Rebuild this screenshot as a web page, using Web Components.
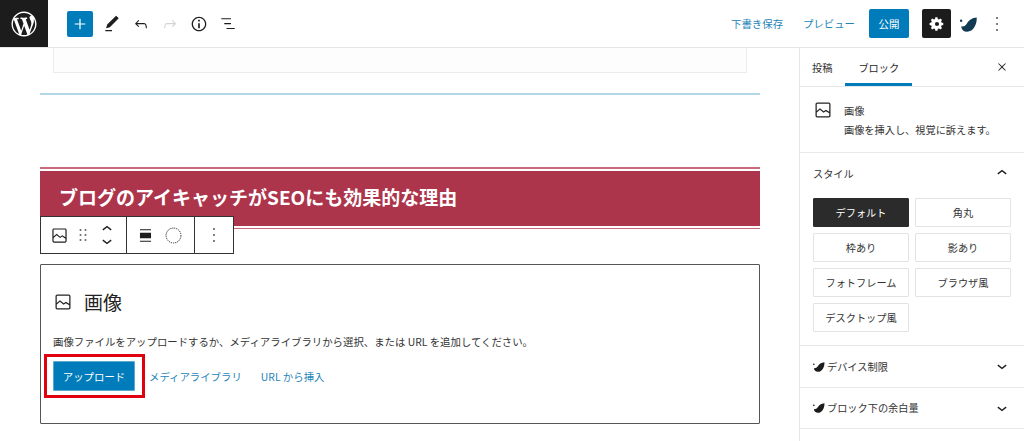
<!DOCTYPE html>
<html lang="ja">
<head>
<meta charset="utf-8">
<title>画像ブロック</title>
<style>
  html, body { margin: 0; height: 100%; overflow: hidden; background: #fff; }
  body { font-family: "Noto Sans CJK JP", "Noto Sans", sans-serif; color: #2f2f2f; }
</style>
</head>
<body>
<edit-screen>
  <top-bar slot="top"></top-bar>
  <editor-canvas slot="main"></editor-canvas>
  <settings-sidebar slot="side"></settings-sidebar>
</edit-screen>

<script>
const ICONS = {
  wp: '<path fill="currentColor" d="M20 10c0-5.51-4.49-10-10-10C4.48 0 0 4.49 0 10c0 5.52 4.48 10 10 10 5.51 0 10-4.48 10-10zM7.78 15.37L4.37 6.22c.55-.02 1.17-.08 1.17-.08.5-.06.44-1.13-.06-1.11 0 0-1.45.11-2.37.11-.18 0-.37 0-.58-.01C4.12 2.69 6.87 1.11 10 1.11c2.33 0 4.45.87 6.05 2.34-.68-.11-1.65.39-1.65 1.58 0 .74.45 1.36.9 2.1.35.61.55 1.36.55 2.46 0 1.49-1.4 5-1.4 5l-3.03-8.37c.54-.02.82-.17.82-.17.5-.05.44-1.25-.06-1.22 0 0-1.44.12-2.38.12-.87 0-2.33-.12-2.33-.12-.5-.03-.56 1.2-.06 1.22l.92.08 1.26 3.41zM17.41 10c.24-.64.74-1.87.43-4.25.7 1.29 1.05 2.71 1.05 4.25 0 3.29-1.73 6.24-4.4 7.78.97-2.59 1.94-5.2 2.92-7.78zM6.1 18.09C3.12 16.65 1.11 13.53 1.11 10c0-1.3.23-2.48.72-3.59C3.25 10.3 4.67 14.2 6.1 18.09zm4.03-6.63l2.58 6.98c-.86.29-1.76.45-2.71.45-.79 0-1.57-.11-2.29-.33.81-2.38 1.62-4.74 2.42-7.1z" transform="translate(2 2)"/>',
  plus: '<path fill="currentColor" d="M11.200 5h1.600v6.200H19v1.600h-6.200V19h-1.600v-6.200H5v-1.600h6.200z"/>',
  pen: '<path fill="currentColor" d="M20.100 5.100 16.900 2 6.200 12.700l-1.300 4.400 4.500-1.300L20.100 5.100zM4 20.800h8v-1.500H4v1.500z"/>',
  undo: '<path fill="currentColor" d="M18.300 11.700c-.6-.6-1.400-.9-2.300-.9H6.700l2.900-3.300-1.100-1-4.500 5L8.500 16l1-1-2.700-2.700H16c.5 0 .9.2 1.300.5 1 1 1 3.400 1 4.500v.3h1.500v-.2c0-1.500 0-4.300-1.500-5.700z"/>',
  redo: '<path fill="currentColor" d="M15.600 6.500l-1.100 1 2.900 3.300H8c-.9 0-1.700.3-2.300.9-1.400 1.500-1.400 4.200-1.400 5.600v.2h1.500v-.3c0-1.100 0-3.500 1-4.500.3-.3.7-.5 1.300-.5h9.200L14.500 15l1.100 1.100 4.600-4.600-4.600-5z"/>',
  info: '<path fill="currentColor" d="M12 3.200c-4.800 0-8.800 3.900-8.800 8.800 0 4.800 3.900 8.800 8.800 8.800 4.800 0 8.800-3.900 8.800-8.800 0-4.800-4-8.800-8.800-8.800zm0 16c-4 0-7.200-3.300-7.200-7.200C4.800 8 8 4.800 12 4.800s7.200 3.300 7.200 7.200c0 4-3.200 7.200-7.200 7.200zM11 17h2v-6h-2v6zm0-8h2V7h-2v2z"/>',
  list: '<path fill="currentColor" d="M3 4.200h13v1.600H3zM7 10.700h9v1.600H7zM10 17.200h11v1.600H10z"/>',
  gear: '<path fill="currentColor" d="M19.500 13.300v-2.600l-2.100-.4c-.1-.5-.3-1-.6-1.400l1.200-1.800-1.800-1.800-1.800 1.200c-.4-.3-.9-.5-1.400-.6l-.4-2.100h-2.600l-.4 2.100c-.5.1-1 .3-1.400.6L6.400 5.300 4.600 7.100l1.200 1.800c-.3.4-.5.9-.6 1.400l-2.100.4v2.600l2.100.4c.1.500.3 1 .6 1.400l-1.200 1.800 1.800 1.800 1.800-1.200c.4.3.9.5 1.400.6l.4 2.100h2.600l.4-2.100c.5-.1 1-.3 1.400-.6l1.800 1.200 1.800-1.800-1.200-1.800c.3-.4.5-.9.6-1.400l2.100-.4zM12 14.500a2.500 2.500 0 1 1 0-5 2.500 2.500 0 0 1 0 5z"/>',
  leaf: '<path fill="currentColor" d="M21.500 5C22 12 18 20.500 11 20.500c-3.500 0-6-2-6.500-6 2 .8 4.500-.2 6-2.500C12.500 8.500 16.500 5 21.500 5z"/><circle fill="currentColor" cx="4.500" cy="8.500" r="1.300"/>',
  dots: '<circle fill="currentColor" cx="12" cy="6" r=".9"/><circle fill="currentColor" cx="12" cy="12" r=".9"/><circle fill="currentColor" cx="12" cy="18" r=".9"/>',
  close: '<path fill="currentColor" d="M13.100 12l5.500-5.500-1.100-1.100-5.500 5.500-5.500-5.500-1.100 1.100 5.500 5.500-5.500 5.500 1.100 1.100 5.500-5.500 5.500 5.500 1.100-1.100z"/>',
  image: '<path fill="currentColor" d="M19 3H5c-1.100 0-2 .9-2 2v14c0 1.100.9 2 2 2h14c1.100 0 2-.9 2-2V5c0-1.100-.9-2-2-2zm.5 16c0 .3-.2.5-.5.500H5c-.3 0-.5-.2-.5-.5v-3.900l3.900-3.300 4.300 3.500 2.800-1.900 4 2.600V19zm0-4.800-4-2.500-2.700 1.800-4.400-3.600-3.900 3.300V5c0-.3.2-.5.500-.5h14c.3 0 .5.200.5.5v9.200z"/>',
  grip: '<path fill="currentColor" d="M8 7h2V5H8v2zm0 6h2v-2H8v2zm0 6h2v-2H8v2zm6-14v2h2V5h-2zm0 8h2v-2h-2v2zm0 6h2v-2h-2v2z"/>',
  up: '<path fill="currentColor" d="M6.500 12.400 12 8l5.500 4.400-1 1.300L12 10.100l-4.500 3.600z"/>',
  down: '<path fill="currentColor" d="M17.500 11.600 12 16l-5.500-4.400 1-1.300 4.500 3.600 4.500-3.600z"/>',
  align: '<path fill="currentColor" d="M5 4h14v1.500H5zM5 8.500h14v7H5zM5 18.500h14V20H5z"/>',
  dashcircle: '<circle cx="12" cy="12" r="8.500" fill="none" stroke="currentColor" stroke-width="1.100" stroke-dasharray="1.400 1.100"/>'
};

class AppIcon extends HTMLElement {
  connectedCallback() {
    const size = this.getAttribute('size') || 24;
    const root = this.shadowRoot || this.attachShadow({ mode: 'open' });
    root.innerHTML = `
      <style>:host { display: inline-flex; flex: none; width: ${size}px; height: ${size}px; } svg { display: block; width: 100%; height: 100%; }</style>
      <svg viewBox="0 0 24 24" aria-hidden="true">${ICONS[this.getAttribute('name')]}</svg>`;
  }
}

const screenTemplate = document.createElement('template');
screenTemplate.innerHTML = `
  <style>
  :host { display: grid; grid-template-columns: 1fr 225px; grid-template-rows: 48px 1fr; height: 441px; width: 1024px; overflow: hidden; }
  .top { grid-column: 1 / 3; display: block; }
  </style>
  <div class="top"><slot name="top"></slot></div>
  <slot name="main"></slot>
  <slot name="side"></slot>
`;
class EditScreen extends HTMLElement {
  constructor() {
    super();
    this.attachShadow({ mode: 'open' });
    this.shadowRoot.appendChild(screenTemplate.content.cloneNode(true));
  }
}

const topTemplate = document.createElement('template');
topTemplate.innerHTML = `
  <style>
  :host { display: flex; align-items: center; height: 48px; box-sizing: border-box; border-bottom: 1px solid #e6e6e6; background: #fff; color: #1e1e1e; }
  .logo { width: 48px; height: 47px; background: #1c1c1c; color: #fff; display: flex; align-items: center; justify-content: center; flex: none; }
  .tools { display: flex; align-items: center; margin-left: 19px; }
  .add { width: 26px; height: 26px; background: #007cba; color: #fff; border-radius: 2px; display: flex; align-items: center; justify-content: center; margin-right: 9px; }
  .tool { width: 20px; height: 20px; display: flex; align-items: center; justify-content: center; margin-right: 9px; }
  .off { color: #d4d4d4; }
  .right { margin-left: auto; display: flex; align-items: center; font-size: 10.4px; color: #1f85b8; }
  .draft { margin-right: 20px; }
  .publish { width: 40px; height: 29px; margin-left: 14px; background: #007cba; color: #fff; border-radius: 2px; display: flex; align-items: center; justify-content: center; }
  .gear { width: 29px; height: 29px; margin-left: 13px; background: #1c1c1c; color: #fff; border-radius: 2px; display: flex; align-items: center; justify-content: center; }
  .leaf { margin-left: 6px; color: #123a52; display: flex; }
  .more { margin: 0 15px 0 6px; color: #444; display: flex; }
  </style>
  <div class="logo"><app-icon name="wp" size="30"></app-icon></div>
  <div class="tools">
    <div class="add"><app-icon name="plus" size="18"></app-icon></div>
    <div class="tool"><app-icon name="pen" size="20"></app-icon></div>
    <div class="tool"><app-icon name="undo" size="18"></app-icon></div>
    <div class="tool off"><app-icon name="redo" size="18"></app-icon></div>
    <div class="tool"><app-icon name="info" size="20"></app-icon></div>
    <div class="tool"><app-icon name="list" size="18"></app-icon></div>
  </div>
  <div class="right">
    <span class="draft">下書き保存</span>
    <span>プレビュー</span>
    <div class="publish">公開</div>
    <div class="gear"><app-icon name="gear" size="20"></app-icon></div>
    <div class="leaf"><app-icon name="leaf" size="22"></app-icon></div>
    <div class="more"><app-icon name="dots" size="24"></app-icon></div>
  </div>
`;
class TopBar extends HTMLElement {
  constructor() {
    super();
    this.attachShadow({ mode: 'open' });
    this.shadowRoot.appendChild(topTemplate.content.cloneNode(true));
  }
}

const canvasTemplate = document.createElement('template');
canvasTemplate.innerHTML = `
  <style>
  :host { display: block; position: relative; height: 393px; overflow: hidden; background: #fff; padding: 0 39px 0 40px; }
  .table-end { height: 25px; margin: 0 13px; box-sizing: border-box; border: 1px solid #ececec; border-top: 0; background: #fdfdfd; }
  .rule { height: 2px; margin-top: 20px; background: #b5d8e8; }
  h2 { margin: 72px 0 0; box-sizing: border-box; height: 62px; padding: 2px 0 1.5px; background: #fff; border-top: 2px solid #c8687a; border-bottom: 1.5px solid #c8687a; font-size: 19px; font-weight: 700; color: #fff; }
  h2 span { display: block; height: 55px; background: #ad354b; line-height: 52px; padding-left: 19px; }
  .toolbar { position: absolute; left: 40px; top: 168px; height: 38px; box-sizing: border-box; display: flex; background: #fff; border: 1px solid #333; color: #1e1e1e; }
  .group { display: flex; align-items: center; border-right: 1px solid #333; }
  .group:last-child { border-right: 0; }
  .g1 { width: 86px; padding-left: 9px; box-sizing: border-box; }
  .g2 { width: 68px; padding-left: 9px; box-sizing: border-box; gap: 8px; }
  .g3 { width: 38px; justify-content: center; color: #444; }
  .mover { display: flex; flex-direction: column; margin-left: 4px; }
  .mover app-icon { margin: -4px 0; }
  .grip { margin-left: 4px; color: #444; }
  .placeholder { margin-top: 35px; height: 160px; box-sizing: border-box; border: 1px solid #555; border-radius: 1px; padding: 24px 12px 0; }
  .title { display: flex; align-items: center; gap: 11px; font-size: 19px; line-height: 26px; color: #222; }
  p { margin: 19px 0 0; font-size: 10.4px; line-height: 16px; color: #333; }
  .actions { display: flex; align-items: center; margin-top: 11px; font-size: 10.4px; color: #1f85b8; }
  .mark { position: relative; margin-right: 14px; display: flex; }
  .mark::after { content: ""; position: absolute; top: -7px; bottom: -7px; left: -9px; right: -10px; border: 3px solid #e1000f; }
  .upload { width: 82px; height: 30px; background: #007cba; color: #fff; border-radius: 2px; display: flex; align-items: center; justify-content: center; box-shadow: inset 0 0 0 1px #5aa9d0; }
  .media { margin-right: 19px; }
  </style>
  <div class="table-end"></div>
  <div class="rule"></div>
  <h2><span>ブログのアイキャッチがSEOにも効果的な理由</span></h2>
  <div class="toolbar">
    <div class="group g1">
      <app-icon name="image" size="19"></app-icon>
      <app-icon class="grip" name="grip" size="20"></app-icon>
      <div class="mover"><app-icon name="up" size="20"></app-icon><app-icon name="down" size="20"></app-icon></div>
    </div>
    <div class="group g2">
      <app-icon name="align" size="19"></app-icon>
      <app-icon name="dashcircle" size="21"></app-icon>
    </div>
    <div class="group g3"><app-icon name="dots" size="24"></app-icon></div>
  </div>
  <div class="placeholder">
    <div class="title"><app-icon name="image" size="20"></app-icon>画像</div>
    <p>画像ファイルをアップロードするか、メディアライブラリから選択、または URL を追加してください。</p>
    <div class="actions">
      <div class="mark"><div class="upload">アップロード</div></div>
      <span class="media">メディアライブラリ</span>
      <span>URL から挿入</span>
    </div>
  </div>
`;
class EditorCanvas extends HTMLElement {
  constructor() {
    super();
    this.attachShadow({ mode: 'open' });
    this.shadowRoot.appendChild(canvasTemplate.content.cloneNode(true));
  }
}

const panelTemplate = document.createElement('template');
panelTemplate.innerHTML = `
  <style>
  :host { display: block; border-bottom: 1px solid #e8e8e8; padding: 0 13px; font-size: 10.2px; color: #333; }
  .head { height: 40.5px; display: flex; align-items: center; justify-content: space-between; }
  .name { display: flex; align-items: center; gap: 1px; }
  ::slotted([slot="mark"]) { margin-left: -2px; }
  .chev { color: #1e1e1e; margin-right: -1px; }
  </style>
  <div class="head"><span class="name"><slot name="mark"></slot><span class="label"></span></span><app-icon class="chev" size="20"></app-icon></div>
  <slot></slot>
`;
class SidePanel extends HTMLElement {
  constructor() {
    super();
    this.attachShadow({ mode: 'open' });
    // set the chevron before the clone goes in, the icon renders as soon as it is connected
    const content = panelTemplate.content.cloneNode(true);
    content.querySelector('.label').textContent = this.getAttribute('label');
    content.querySelector('.chev').setAttribute('name', this.hasAttribute('open') ? 'up' : 'down');
    this.shadowRoot.appendChild(content);
  }
}

const sideTemplate = document.createElement('template');
sideTemplate.innerHTML = `
  <style>
  :host { display: block; height: 393px; overflow: hidden; box-sizing: border-box; border-left: 1px solid #e6e6e6; background: #fff; font-size: 10.2px; color: #333; }
  .tabs { height: 39px; box-sizing: border-box; display: flex; align-items: center; border-bottom: 1px solid #e8e8e8; padding-left: 12px; }
  .tab { height: 38px; display: flex; align-items: center; }
  .active { margin-left: 13px; padding: 0 13px; box-shadow: inset 0 -3px 0 #007cba; color: #2a2a2a; }
  .close { margin-left: auto; margin-right: 15px; color: #222; display: flex; }
  .card { height: 66px; box-sizing: border-box; padding: 13px 13px 0; display: flex; gap: 11px; border-bottom: 1px solid #e8e8e8; }
  .card app-icon { color: #222; }
  .card div { line-height: 19px; padding-top: 1px; }
  .styles { display: grid; grid-template-columns: 96px 96px; gap: 6px; padding-bottom: 13px; margin-top: 4.5px; }
  .btn { height: 29px; box-sizing: border-box; border: 1px solid #e3e3e3; border-radius: 1px; display: flex; align-items: center; justify-content: center; background: #fff; }
  .on { background: #2b2b2b; border-color: #2b2b2b; color: #fff; }
  .leaf { color: #1c1c1c; }
  </style>
  <div class="tabs">
    <span class="tab">投稿</span>
    <span class="tab active">ブロック</span>
    <span class="close"><app-icon name="close" size="14"></app-icon></span>
  </div>
  <div class="card">
    <app-icon name="image" size="20"></app-icon>
    <div>画像<br>画像を挿入し、視覚に訴えます。</div>
  </div>
  <side-panel label="スタイル" open>
    <div class="styles">
      <div class="btn on">デフォルト</div><div class="btn">角丸</div>
      <div class="btn">枠あり</div><div class="btn">影あり</div>
      <div class="btn">フォトフレーム</div><div class="btn">ブラウザ風</div>
      <div class="btn">デスクトップ風</div>
    </div>
  </side-panel>
  <side-panel label="デバイス制限"><app-icon class="leaf" slot="mark" name="leaf" size="15"></app-icon></side-panel>
  <side-panel label="ブロック下の余白量"><app-icon class="leaf" slot="mark" name="leaf" size="15"></app-icon></side-panel>
`;
class SettingsSidebar extends HTMLElement {
  constructor() {
    super();
    this.attachShadow({ mode: 'open' });
    this.shadowRoot.appendChild(sideTemplate.content.cloneNode(true));
  }
}

customElements.define('app-icon', AppIcon);
customElements.define('side-panel', SidePanel);
customElements.define('top-bar', TopBar);
customElements.define('editor-canvas', EditorCanvas);
customElements.define('settings-sidebar', SettingsSidebar);
customElements.define('edit-screen', EditScreen);
</script>
</body>
</html>
